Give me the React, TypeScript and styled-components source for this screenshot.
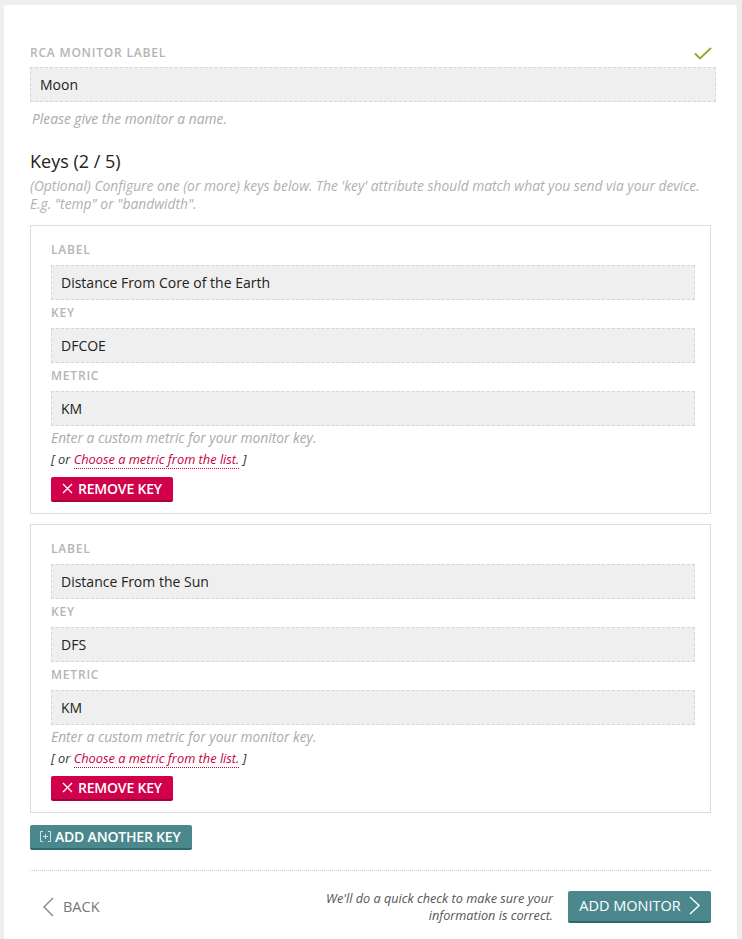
import React, { FC } from "react";
import styled, { createGlobalStyle } from "styled-components";

const GlobalStyle = createGlobalStyle`
  html, body {
    margin: 0;
    padding: 0;
    background: #edeeed;
    font-family: "Open Sans", "Liberation Sans", Arial, sans-serif;
  }
  * { box-sizing: border-box; }
`;

interface KeyItem {
  label: string;
  keyName: string;
  metric: string;
}

const keys: KeyItem[] = [
  { label: "Distance From Core of the Earth", keyName: "DFCOE", metric: "KM" },
  { label: "Distance From the Sun", keyName: "DFS", metric: "KM" },
];

const Check = () => (
  <svg width="18" height="13" viewBox="0 0 18 13" fill="none">
    <path d="M1 6.5 L6 11.5 L17 1" stroke="#8aac1e" strokeWidth="1.8" />
  </svg>
);

const Cross = () => (
  <svg width="11" height="11" viewBox="0 0 11 11" fill="none">
    <path d="M1 1 L10 10 M10 1 L1 10" stroke="#fff" strokeWidth="1.3" />
  </svg>
);

const PlusBox = () => (
  <svg width="11" height="11" viewBox="0 0 11 11" fill="none">
    <path
      d="M3 0.5 H0.5 V10.5 H3 M8 0.5 H10.5 V10.5 H8 M5.5 3 V8 M3 5.5 H8"
      stroke="rgba(255,255,255,0.75)"
      strokeWidth="1"
    />
  </svg>
);

const ChevronLeft = () => (
  <svg width="12" height="20" viewBox="0 0 12 20" fill="none">
    <path d="M11 1 L2 10 L11 19" stroke="#888" strokeWidth="1.4" />
  </svg>
);

const ChevronRight = () => (
  <svg width="11" height="19" viewBox="0 0 11 19" fill="none">
    <path d="M1 1 L10 9.5 L1 18" stroke="#fff" strokeWidth="1.4" />
  </svg>
);

const Field: FC<{ label: string; value: string }> = ({ label, value }) => (
  <>
    <FieldLabel>{label}</FieldLabel>
    <TextInput value={value} readOnly />
  </>
);

const KeyCard: FC<{ item: KeyItem }> = ({ item }) => (
  <KeyBox>
    <Field label="Label" value={item.label} />
    <Field label="Key" value={item.keyName} />
    <Field label="Metric" value={item.metric} />
    <KeyHelp>Enter a custom metric for your monitor key.</KeyHelp>
    <ChooseLine>
      [ or <ChooseLink href="#">Choose a metric from the list.</ChooseLink> ]
    </ChooseLine>
    <RemoveButton type="button">
      <Cross />
      REMOVE KEY
    </RemoveButton>
  </KeyBox>
);

const App: FC = () => (
  <>
    <GlobalStyle />
    <Card>
      <LabelRow>
        <FieldLabel>RCA Monitor Label</FieldLabel>
        <Check />
      </LabelRow>
      <TextInput value="Moon" readOnly />
      <Help>Please give the monitor a name.</Help>

      <Heading>Keys (2 / 5)</Heading>
      <Description>
        (Optional) Configure one (or more) keys below. The 'key' attribute
        should match what you send via your device. E.g. "temp" or
        "bandwidth".
      </Description>

      <KeyList>
        {keys.map((k) => (
          <KeyCard key={k.keyName} item={k} />
        ))}
      </KeyList>

      <AddButton type="button">
        <PlusBox />
        ADD ANOTHER KEY
      </AddButton>

      <Divider />

      <Footer>
        <BackLink href="#">
          <ChevronLeft />
          BACK
        </BackLink>
        <FooterRight>
          <FooterNote>
            We'll do a quick check to make sure your
            <br />
            information is correct.
          </FooterNote>
          <SubmitButton type="button">
            ADD MONITOR
            <ChevronRight />
          </SubmitButton>
        </FooterRight>
      </Footer>
    </Card>
  </>
);

const Card = styled.div`
  margin: 5px 5px 0 4px;
  width: 733px;
  min-height: 960px;
  background: #fff;
  border-radius: 3px 3px 0 0;
  padding: 40px 26px 0 26px;
`;

const LabelRow = styled.div`
  display: flex;
  justify-content: space-between;
  align-items: center;
  margin: 0 -5px 6px 0;
  & > div {
    margin-bottom: 0;
  }
  svg {
    margin-right: 4px;
  }
`;

const FieldLabel = styled.div`
  font-size: 12px;
  line-height: 16px;
  font-weight: 600;
  color: #b4b4b4;
  text-transform: uppercase;
  letter-spacing: 0.8px;
  margin-bottom: 7px;
`;

const TextInput = styled.input`
  display: block;
  width: calc(100% + 5px);
  height: 35px;
  margin: 0 -5px 5px 0;
  padding: 0 9px;
  background: #eeefee;
  border: 1px dashed #d6d6d6;
  border-radius: 0;
  font-family: inherit;
  font-size: 14px;
  color: #222;
  outline: none;
`;

const Help = styled.div`
  font-size: 13.8px;
  line-height: 18px;
  font-style: italic;
  color: #aaa;
  margin: 8px 0 0 2px;
`;

const Heading = styled.h2`
  font-size: 18px;
  line-height: 24px;
  font-weight: 400;
  color: #222;
  margin: 21px 0 4px;
`;

const Description = styled.p`
  font-size: 13.8px;
  line-height: 18px;
  font-style: italic;
  color: #b0b0b0;
  margin: 0 0 12px;
`;

const KeyList = styled.div`
  display: flex;
  flex-direction: column;
  gap: 10px;
`;

const KeyBox = styled.div`
  border: 1px solid #dcdcdc;
  padding: 16px 20px 11px 20px;
`;

const KeyHelp = styled.div`
  font-size: 13.8px;
  line-height: 18px;
  font-style: italic;
  color: #aaa;
  margin-top: -2px;
`;

const ChooseLine = styled.div`
  font-size: 12.8px;
  line-height: 18px;
  font-style: italic;
  color: #333;
  margin-top: 3px;
`;

const ChooseLink = styled.a`
  color: #c7003f;
  text-decoration: none;
  border-bottom: 1px dotted #c7003f;
`;

const ButtonBase = styled.button`
  display: inline-flex;
  align-items: center;
  border: none;
  border-radius: 2px;
  color: #fff;
  font-family: inherit;
  font-weight: 600;
  font-size: 14px;
  cursor: pointer;
  padding: 0;
`;

const RemoveButton = styled(ButtonBase)`
  margin-top: 9px;
  height: 25px;
  width: 122px;
  padding-left: 11px;
  gap: 5px;
  background: #d1004a;
  border-bottom: 2px solid #a8003b;
  letter-spacing: -0.2px;
`;

const AddButton = styled(ButtonBase)`
  margin-top: 12px;
  height: 25px;
  width: 162px;
  padding-left: 10px;
  gap: 4px;
  background: #4a888e;
  border-bottom: 2px solid #2f6a70;
  letter-spacing: -0.2px;
`;

const Divider = styled.div`
  border-top: 1px dotted #c4c4c4;
  margin-top: 20px;
`;

const Footer = styled.div`
  display: flex;
  justify-content: space-between;
  align-items: center;
  padding-top: 19px;
`;

const BackLink = styled.a`
  display: inline-flex;
  align-items: center;
  gap: 9px;
  margin-left: 12px;
  font-size: 14.5px;
  color: #777;
  text-decoration: none;
`;

const FooterRight = styled.div`
  display: flex;
  align-items: center;
  gap: 15px;
`;

const FooterNote = styled.div`
  font-size: 12.7px;
  line-height: 16.5px;
  font-style: italic;
  color: #555;
  text-align: right;
`;

const SubmitButton = styled(ButtonBase)`
  height: 32px;
  width: 143px;
  justify-content: center;
  gap: 8px;
  font-size: 14.5px;
  font-weight: 400;
  background: #4a888e;
  border-bottom: 2px solid #2f6a70;
`;

export default App;
